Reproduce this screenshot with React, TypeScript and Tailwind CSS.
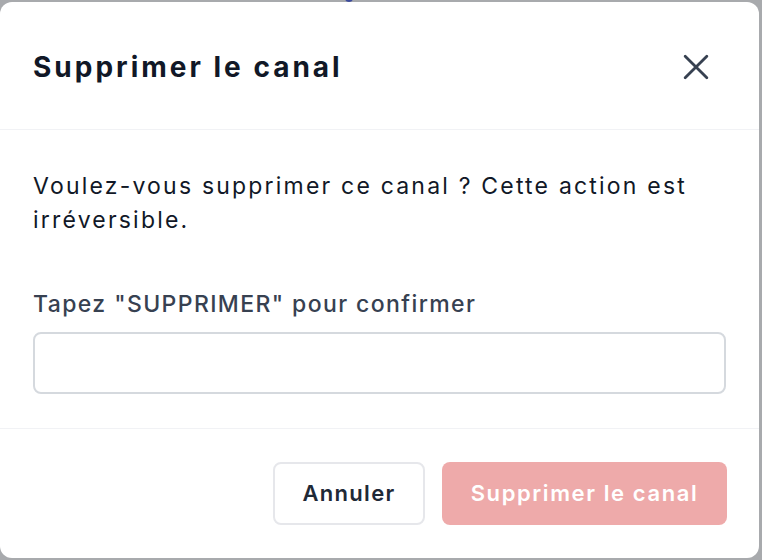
import { useState } from "react";

export default function App() {
  const [value, setValue] = useState("");
  const canDelete = value === "SUPPRIMER";

  return (
    <div
      className="relative w-[762px] h-[560px] overflow-hidden bg-[#a8aaad]"
      style={{ fontFamily: "Inter, 'Noto Sans', sans-serif" }}
    >
      {/* page behind the overlay */}
      <div className="absolute left-[345px] top-[-6px] w-[8px] h-[8px] rounded-full bg-[#3b4a9c]" />
      <div className="absolute left-[340px] top-[554px] flex items-center gap-3 text-[22px] font-semibold text-[#3b4a9c]">
        <span className="w-[16px] h-[16px] rounded bg-[#3b4a9c]" />
        <span>Produits</span>
      </div>

      <div className="relative pt-[2px] pr-[3px]">
        <div className="w-[759px] h-[556px] rounded-xl bg-white flex flex-col overflow-hidden">
          {/* header */}
          <div className="h-[128px] shrink-0 flex items-center justify-between pt-[3px] pl-[33px] pr-[50px] border-b border-[#f1f2f5]">
            <h2 className="text-[28px] font-bold text-[#111827] tracking-[3px]">
              Supprimer le canal
            </h2>
            <button className="w-[26px] h-[26px] flex items-center justify-center text-[#374151]">
              <svg viewBox="0 0 24 24" className="w-[26px] h-[26px]" fill="none" stroke="currentColor" strokeWidth="2.6" strokeLinecap="round">
                <path d="M2 2l20 20M22 2L2 22" />
              </svg>
            </button>
          </div>

          {/* body */}
          <div className="flex-1 px-[33px] pt-[39px] border-b border-[#f1f2f5]">
            <p className="text-[23px] leading-[34px] tracking-[2.2px] text-[#111827] max-w-[694px]">
              Voulez-vous supprimer ce canal ? Cette action est irréversible.
            </p>
            <label className="block mt-[51px] mb-[11px] text-[23px] leading-[33px] tracking-[1.4px] font-medium text-[#374151]">
              Tapez "SUPPRIMER" pour confirmer
            </label>
            <input
              value={value}
              onChange={(e) => setValue(e.target.value)}
              className="block w-full h-[62px] rounded-lg border-2 border-[#d5d9de] px-4 text-[22px] outline-none"
            />
          </div>

          {/* footer */}
          <div className="h-[129px] shrink-0 flex items-center justify-end gap-[17px] pr-[32px]">
            <button className="h-[63px] w-[152px] rounded-lg border-2 border-[#e6e7eb] text-[22px] tracking-[1.3px] font-semibold text-[#1f2937]">
              Annuler
            </button>
            <button
              disabled={!canDelete}
              className="h-[63px] w-[285px] rounded-lg bg-[#eeaaaa] text-[22px] tracking-[1.6px] font-semibold text-white"
            >
              Supprimer le canal
            </button>
          </div>
        </div>
      </div>
    </div>
  );
}
